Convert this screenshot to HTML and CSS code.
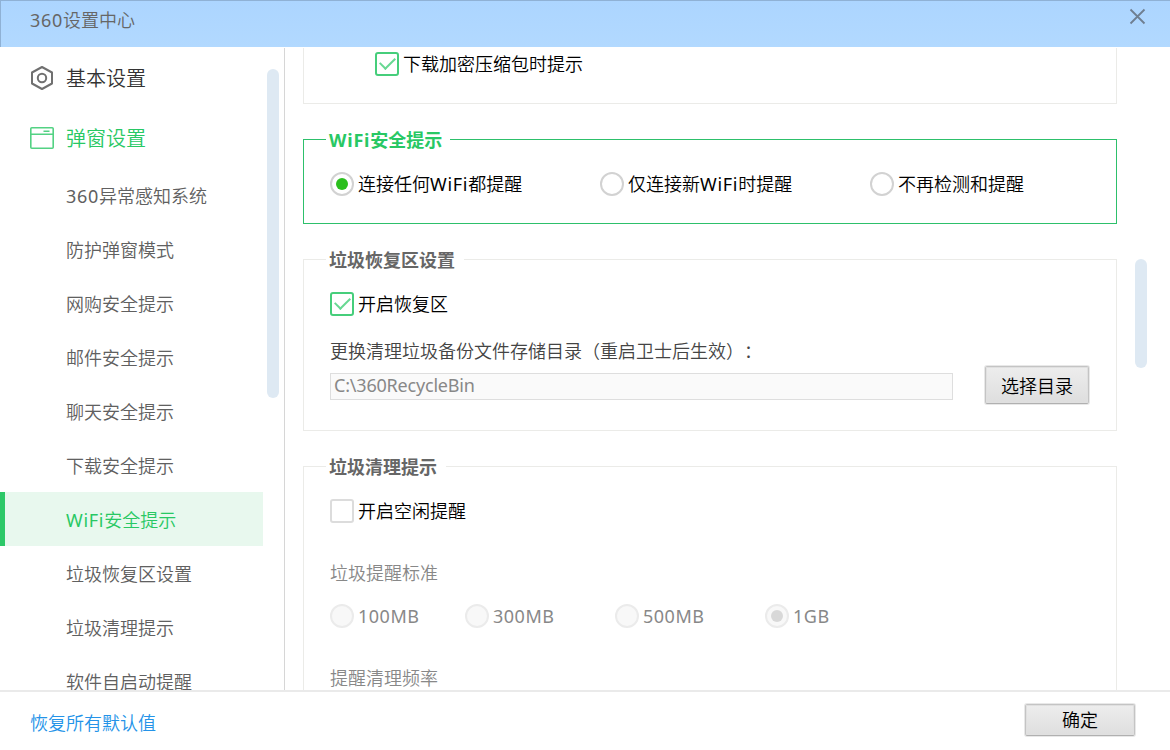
FILE: index.html
```html
<!DOCTYPE html>
<html lang="zh-CN">
<head>
    <meta charset="UTF-8">
    <meta name="viewport" content="width=device-width, initial-scale=1.0">
    <title>360设置中心</title>
    <link rel="stylesheet" href="styles.css">
</head>
<body>

    <header class="titlebar">
        <span class="title"><span class="num">360</span>设置中心</span>
        <svg class="close" width="17" height="17" viewBox="0 0 17 17">
            <path d="M1.5 1.5L15.5 15.5M15.5 1.5L1.5 15.5" fill="none" stroke="#6f7f91" stroke-width="1.8"/>
        </svg>
    </header>

    <div class="main">
        <nav class="sidebar">
            <div class="menu">
                <div class="group">
                    <svg width="24" height="26" viewBox="0 0 24 26" fill="none" stroke="#707070" stroke-width="2">
                        <path d="M12 2L22 7.5V18.5L12 24L2 18.5V7.5Z" stroke-linejoin="round"/>
                        <circle cx="12" cy="13" r="4.2"/>
                    </svg>
                    <span>基本设置</span>
                </div>
                <div class="group open">
                    <svg width="24" height="26" viewBox="0 0 24 26" fill="none" stroke="#53d283" stroke-width="1.6">
                        <rect x="0.8" y="2.8" width="22.4" height="20.4" rx="1"/>
                        <path d="M1 9.2H23M13.5 6.2H19.5"/>
                    </svg>
                    <span>弹窗设置</span>
                </div>
                <ul>
                    <li><span class="num">360</span>异常感知系统</li>
                    <li>防护弹窗模式</li>
                    <li>网购安全提示</li>
                    <li>邮件安全提示</li>
                    <li>聊天安全提示</li>
                    <li>下载安全提示</li>
                    <li class="active"><span class="wifi">WiFi</span>安全提示</li>
                    <li>垃圾恢复区设置</li>
                    <li>垃圾清理提示</li>
                    <li>软件自启动提醒</li>
                </ul>
            </div>
            <div class="scroll scroll-menu"></div>
        </nav>

        <div class="content">
            <fieldset class="download">
                <label class="option"><i class="check on"></i>下载加密压缩包时提示</label>
            </fieldset>

            <fieldset class="current">
                <legend><span class="wifi">WiFi</span>安全提示</legend>
                <div class="options wide">
                    <label class="option"><i class="radio on"></i>连接任何<span class="wifi">WiFi</span>都提醒</label>
                    <label class="option"><i class="radio"></i>仅连接新<span class="wifi">WiFi</span>时提醒</label>
                    <label class="option"><i class="radio"></i>不再检测和提醒</label>
                </div>
            </fieldset>

            <fieldset class="recycle">
                <legend>垃圾恢复区设置</legend>
                <label class="option"><i class="check on"></i>开启恢复区</label>
                <p class="hint">更换清理垃圾备份文件存储目录（重启卫士后生效）：</p>
                <div class="path-row">
                    <div class="path">C:\360RecycleBin</div>
                    <button class="browse">选择目录</button>
                </div>
            </fieldset>

            <fieldset class="clean">
                <legend>垃圾清理提示</legend>
                <label class="option"><i class="check"></i>开启空闲提醒</label>
                <p class="label">垃圾提醒标准</p>
                <div class="options sizes">
                    <label class="option"><i class="radio"></i>100MB</label>
                    <label class="option"><i class="radio"></i>300MB</label>
                    <label class="option"><i class="radio"></i>500MB</label>
                    <label class="option"><i class="radio on"></i>1GB</label>
                </div>
                <p class="label">提醒清理频率</p>
            </fieldset>
        </div>
        <div class="scroll scroll-content"></div>
    </div>

    <footer class="footer">
        <a class="reset">恢复所有默认值</a>
        <button class="ok">确定</button>
    </footer>

</body>
</html>
```

FILE: styles.css
```css
* {
    box-sizing: border-box;
}

body {
    margin: 0;
    width: 1170px;
    height: 750px;
    overflow: hidden;
    display: flex;
    flex-direction: column;
    background: #fff;
    color: #000;
    font-family: "Noto Sans", "Noto Sans CJK SC", sans-serif;
    font-size: 18px;
    font-weight: 350;
    line-height: 24px;
    text-spacing-trim: space-all;
}

ul, p {
    margin: 0;
    padding: 0;
    list-style: none;
}

.wifi {
    font-weight: 400;
    letter-spacing: 0.7px;
}

.num {
    font-weight: 400;
    letter-spacing: 0.7px;
}

legend .wifi {
    font-weight: bold;
    letter-spacing: 0.8px;
}

/* title bar */
.titlebar {
    flex: none;
    display: flex;
    justify-content: space-between;
    height: 47px;
    padding: 7px 24px 0 29px;
    background: linear-gradient(#acd5ff, #b2d9ff);
    border-top: 1px solid #8fb1d5;
    border-left: 1px solid #8fb1d5;
    color: #666;
}

.main {
    flex: none;
    display: flex;
    height: 642px;
    margin-top: 1px;
    overflow: hidden;
}

.sidebar {
    display: flex;
    width: 285px;
    height: 642px;
    border-right: 1px solid #d6d6d6;
}

.menu {
    width: 263px;
}

.group {
    display: flex;
    align-items: center;
    gap: 12px;
    height: 60px;
    padding-left: 30px;
    font-size: 20px;
    color: #333;
}

.group span {
    padding-top: 2px;
}

.group.open {
    color: #28c864;
}

.menu li {
    height: 54px;
    padding-left: 66px;
    line-height: 56px;
    color: #606060;
}

.menu li.active {
    padding-left: 61px;
    border-left: 5px solid #2dc868;
    background: #e8f8ee;
    color: #28c864;
}

.scroll {
    flex: none;
    width: 12px;
    border-radius: 6px;
    background: #dee9f3;
}

.scroll-menu {
    height: 329px;
    margin: 21px 0 0 4px;
}

.scroll-content {
    height: 109px;
    margin: 211px 0 0 18px;
}

.content {
    width: 832px;
    padding-left: 18px;
}

fieldset {
    min-width: 0;
    margin: 0 0 23px;
    padding: 20px 26px 0;
    border: 1px solid #ebebe8;
}

legend {
    height: 25px;
    margin-left: -4px;
    padding: 0 9px 0 3px;
    line-height: 27px;
    font-weight: bold;
    color: #666;
}

.download {
    height: 56px;
    padding: 4px 0 0 71px;
    border-top: none;
}

.current {
    height: 97px;
    border-color: #2dc06b;
}

.current legend {
    padding-right: 8px;
    color: #28c864;
}

.recycle {
    height: 184px;
}

.clean {
    height: 300px;
}

.options {
    display: grid;
}

.options.wide {
    grid-template-columns: 270px 270px auto;
}

.options.sizes {
    grid-template-columns: 135px 150px 150px auto;
    margin: 19px 0 38px;
    color: #888;
    font-weight: 400;
    letter-spacing: 0.5px;
}

.option {
    display: flex;
    align-items: center;
    height: 24px;
    white-space: nowrap;
}

.check, .radio {
    flex: none;
    position: relative;
    width: 24px;
    height: 24px;
    margin-right: 4px;
    border: 2px solid #dcdcdc;
    border-radius: 3px;
    background: #fff;
}

.check.on {
    border-color: #46ce7b;
}

.check.on::after {
    content: "";
    position: absolute;
    left: 3px;
    top: 3px;
    width: 13px;
    height: 7px;
    border-left: 2px solid #67d892;
    border-bottom: 2px solid #67d892;
    transform: rotate(-45deg);
}

.radio {
    border-color: #d2d2d2;
    border-radius: 50%;
}

.radio.on::after {
    content: "";
    position: absolute;
    left: 4px;
    top: 4px;
    width: 12px;
    height: 12px;
    border-radius: 50%;
    background: #2bbf1d;
}

.sizes .radio {
    border-color: #ebebeb;
    background: #f8f8f8;
}

.sizes .radio.on::after {
    background: #d8d8d8;
}

.hint {
    margin-top: 23px;
    color: #444;
}

.path-row {
    display: flex;
    align-items: center;
    gap: 32px;
    margin-top: 3px;
}

.path {
    width: 623px;
    height: 27px;
    margin-top: 3px;
    padding-left: 3px;
    border: 1px solid #dedede;
    background: #fafafa;
    color: #888;
    font-weight: 400;
    letter-spacing: -0.2px;
    line-height: 23px;
}

.label {
    margin-top: 38px;
    color: #888;
}

button {
    padding: 0;
    border: 1px solid #c4c4c4;
    border-bottom-color: #b0b0b0;
    border-radius: 2px;
    background: linear-gradient(#ededed, #dedede);
    box-shadow: inset 0 0 0 1px #e0e0e0, 0 0 0 1px #e8e8e8;
    color: #000;
    font: inherit;
}

.browse {
    width: 104px;
    height: 38px;
    padding-top: 1px;
}

/* footer */
.footer {
    flex: 1;
    display: flex;
    align-items: center;
    justify-content: space-between;
    padding: 0 35px 2px 30px;
    border-top: 2px solid #eaeaea;
}

.reset {
    margin-top: 6px;
    color: #2493e8;
}

.ok {
    width: 110px;
    height: 32px;
}
```
